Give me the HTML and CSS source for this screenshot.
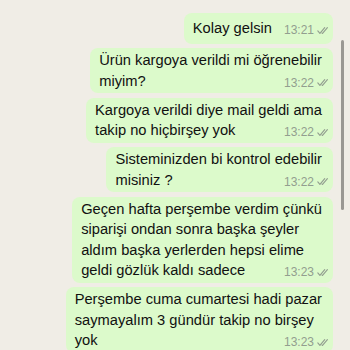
FILE: index.html
```html
<!DOCTYPE html>
<html lang="tr">
<head>
	<meta charset="UTF-8">
	<title>Sohbet</title>
	<link rel="stylesheet" href="styles.css">
</head>
<body>
	<div class="chat">
		<div class="msg single">
			<p class="text">Kolay gelsin<span class="meta"><span class="time">13:21</span><svg class="ticks" viewBox="0 0 16 10" width="13" height="9"><path d="M1 5.5l2.6 3L9.5 1.5M6.2 8.2l0.6 0.4L12.8 1.5" /></svg></span></p>
		</div>
		<div class="msg">
			<p class="text">Ürün kargoya verildi mi öğrenebilir<br>miyim?<span class="meta"><span class="time">13:22</span><svg class="ticks" viewBox="0 0 16 10" width="13" height="9"><path d="M1 5.5l2.6 3L9.5 1.5M6.2 8.2l0.6 0.4L12.8 1.5" /></svg></span></p>
		</div>
		<div class="msg">
			<p class="text">Kargoya verildi diye mail geldi ama<br>takip no hiçbirşey yok<span class="meta"><span class="time">13:22</span><svg class="ticks" viewBox="0 0 16 10" width="13" height="9"><path d="M1 5.5l2.6 3L9.5 1.5M6.2 8.2l0.6 0.4L12.8 1.5" /></svg></span></p>
		</div>
		<div class="msg">
			<p class="text">Sisteminizden bi kontrol edebilir<br>misiniz ?<span class="meta"><span class="time">13:22</span><svg class="ticks" viewBox="0 0 16 10" width="13" height="9"><path d="M1 5.5l2.6 3L9.5 1.5M6.2 8.2l0.6 0.4L12.8 1.5" /></svg></span></p>
		</div>
		<div class="msg">
			<p class="text">Geçen hafta perşembe verdim çünkü<br>siparişi ondan sonra başka şeyler<br>aldım başka yerlerden hepsi elime<br>geldi gözlük kaldı sadece<span class="meta"><span class="time">13:23</span><svg class="ticks" viewBox="0 0 16 10" width="13" height="9"><path d="M1 5.5l2.6 3L9.5 1.5M6.2 8.2l0.6 0.4L12.8 1.5" /></svg></span></p>
		</div>
		<div class="msg">
			<p class="text">Perşembe cuma cumartesi hadi pazar<br>saymayalım 3 gündür takip no birşey<br>yok<span class="meta"><span class="time">13:23</span><svg class="ticks" viewBox="0 0 16 10" width="13" height="9"><path d="M1 5.5l2.6 3L9.5 1.5M6.2 8.2l0.6 0.4L12.8 1.5" /></svg></span></p>
		</div>
	</div>
	<div class="scrollbar"></div>
</body>
</html>
```

FILE: styles.css
```css
*{
	margin: 0;
	padding: 0;
}
body{
	width: 350px;
	height: 350px;
	overflow: hidden;
	position: relative;
	background-color: #f0ede6;
	font-family: "Liberation Sans", Arial, sans-serif;
	color: #111;
}
.chat{
	display: flex;
	flex-direction: column;
	align-items: flex-end;
	gap: 4.5px;
	padding: 13px 17px 0 0;
}
.msg{
	background-color: #dcfacb;
	border-radius: 8px;
	padding: 2px 11px 2px 9px;
}
.msg.single{
	padding-top: 5px;
	padding-bottom: 5px;
}
.text{
	display: flow-root;
	font-size: 14.7px;
	line-height: 20.5px;
	white-space: nowrap;
}
.meta{
	float: right;
	margin: 5px -8px 0 12px;
	line-height: 14px;
	font-size: 12px;
	color: #929e8f;
	display: flex;
	align-items: center;
	gap: 3px;
}
.ticks{
	fill: none;
	stroke: #929e8f;
	stroke-width: 1.4;
	stroke-linecap: round;
	stroke-linejoin: round;
}
.scrollbar{
	position: absolute;
	left: 341px;
	top: 40px;
	width: 3px;
	height: 170px;
	border-radius: 2px;
	background-color: #9a9893;
}
```
